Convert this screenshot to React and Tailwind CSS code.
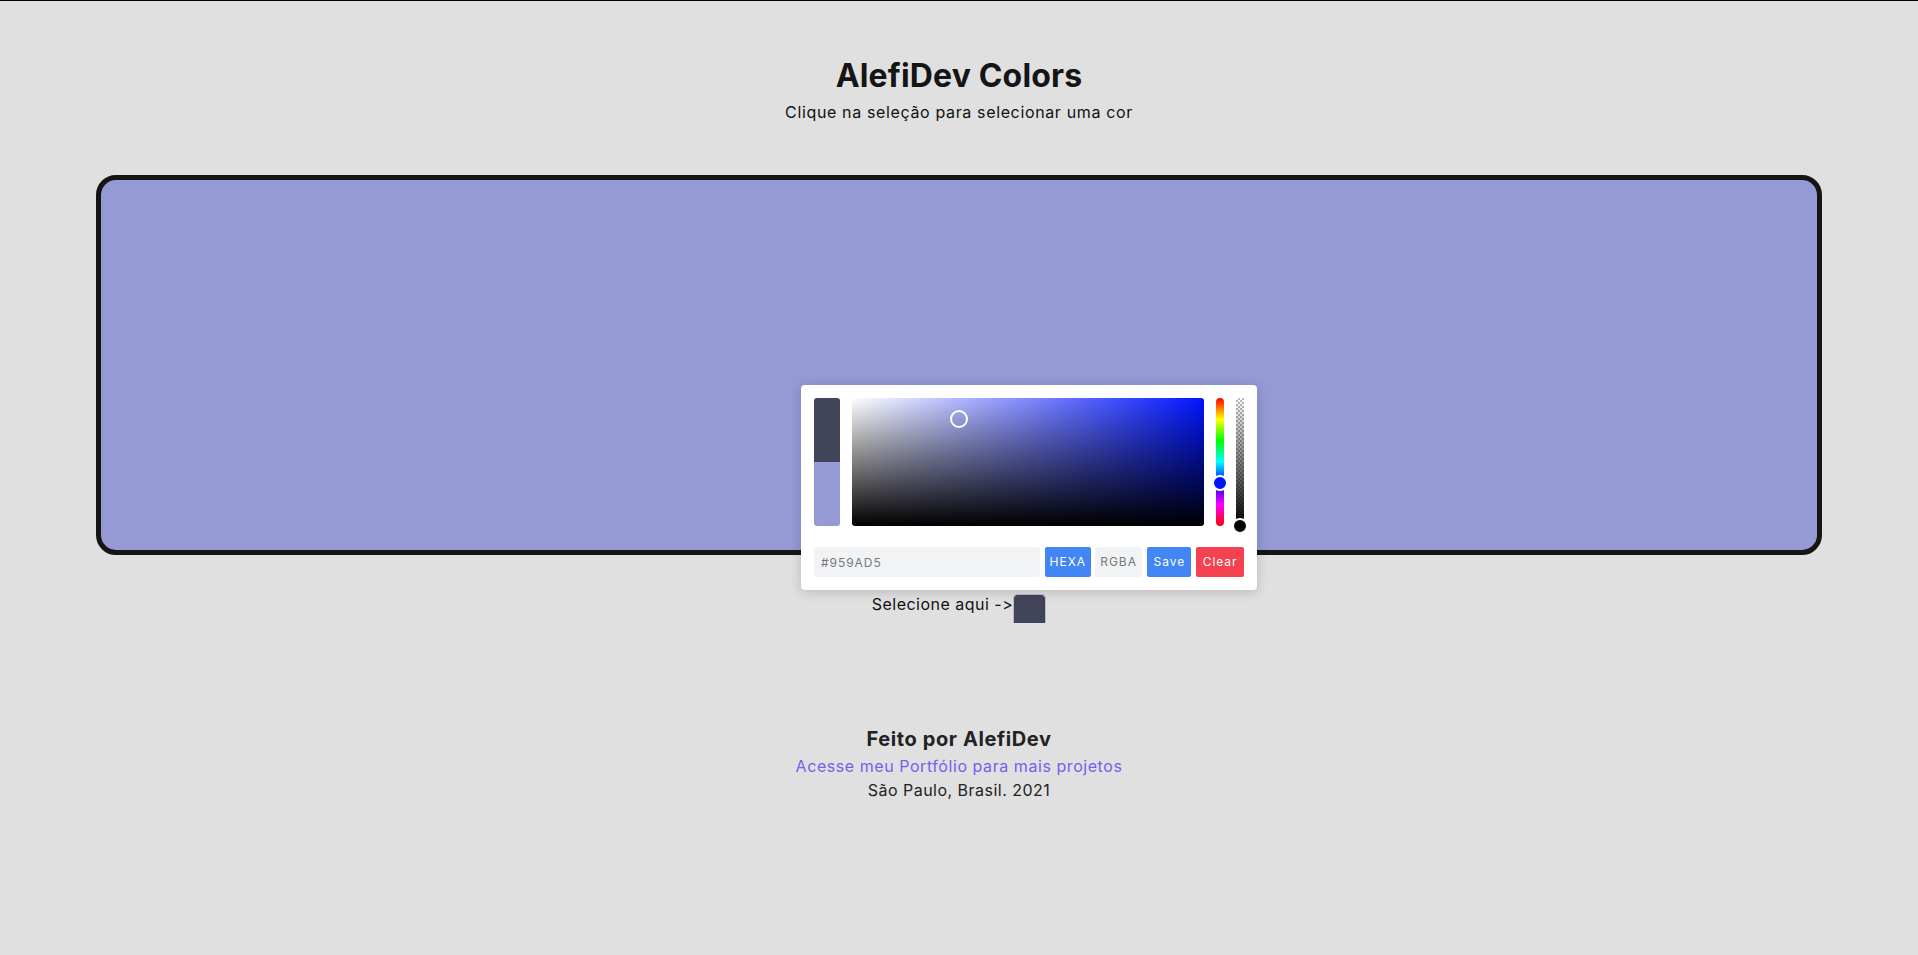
import React from 'react';

const font = { fontFamily: 'Inter, "Noto Sans", sans-serif' };

// popup do seletor de cor (estilo pickr classic)
function ColorPicker() {
    return (
        <div className="absolute left-[801px] top-[384px] w-[456px] h-[205px] bg-white rounded-[4px] shadow-[0_2px_12px_rgba(0,0,0,0.18)] p-[13px] flex flex-col">
            <div className="flex h-[128px]">
                <div className="w-[26px] h-full rounded-[3px] overflow-hidden flex flex-col">
                    <div className="flex-1 bg-[#424459]"></div>
                    <div className="flex-1 bg-[#959AD5]"></div>
                </div>
                <div className="relative ml-[12px] w-[353px] h-full rounded-[3px] overflow-hidden bg-[linear-gradient(to_top,#000,transparent),linear-gradient(to_right,#fff,#0015ff)]">
                    <div className="absolute left-[98px] top-[12px] w-[18px] h-[18px] rounded-full border-2 border-white"></div>
                </div>
                <div className="relative ml-[12px] w-[8px] h-full rounded-full bg-[linear-gradient(to_bottom,#f00,#ff0,#0f0,#0ff,#00f,#f0f,#f00)]">
                    <div className="absolute left-[-4px] top-[77px] w-[16px] h-[16px] rounded-full bg-[#0015ff] border-2 border-white"></div>
                </div>
                <div className="relative ml-[12px] w-[8px] h-full">
                    <div className="w-full h-full bg-[repeating-conic-gradient(#bbb_0%_25%,#fff_0%_50%)] bg-[length:4px_4px]">
                        <div className="w-full h-full bg-[linear-gradient(to_bottom,transparent,#000)]"></div>
                    </div>
                    <div className="absolute left-[-4px] top-[120px] w-[16px] h-[16px] rounded-full bg-black border-2 border-white"></div>
                </div>
            </div>
            <div className="flex mt-[21px] h-[30px] text-[12px] tracking-[0.08em]">
                <input
                    readOnly
                    value="#959AD5"
                    className="w-[227px] h-full bg-[#f1f3f4] rounded-[2px] px-[7px] text-[#75797e] tracking-[0.08em] outline-none"
                    style={font}
                />
                <button className="ml-[5px] w-[46px] h-full bg-[#4285f4] text-white rounded-[2px]">HEXA</button>
                <button className="ml-[4px] w-[48px] h-full bg-[#f1f3f4] text-[#75797e] rounded-[2px]">RGBA</button>
                <button className="ml-[5px] w-[44px] h-full bg-[#4285f4] text-white rounded-[2px]">Save</button>
                <button className="ml-[5px] w-[48px] h-full bg-[#f44250] text-white rounded-[2px]">Clear</button>
            </div>
        </div>
    );
}

export default function App() {
    return (
        <div className="relative min-h-[955px] bg-[#e0e0e0] border-t border-black text-[#111]" style={font}>
            <header className="pt-[51px] text-center">
                <h1 className="text-[32px] leading-[48px] font-bold text-[#151515] tracking-[0.005em]">AlefiDev Colors</h1>
                <p className="text-[16px] leading-[24px] tracking-[0.04em]">Clique na seleção para selecionar uma cor</p>
            </header>

            <main className="mt-[51px] mx-auto w-[90%] h-[380px] border-[5px] border-[#151515] rounded-[20px] bg-[#959AD5]"></main>

            <div className="mt-[39px] flex justify-center items-start">
                <span className="text-[16px] leading-[20px] tracking-[0.03em] [font-variant-ligatures:none] [font-feature-settings:'calt'_0]">Selecione aqui -&gt;</span>
                <button className="w-[33px] h-[29px] bg-[#42445a] border border-b-0 border-[#b9bac6] rounded-t-[5px]"></button>
            </div>

            <footer className="mt-[101px] text-center">
                <h2 className="text-[20px] leading-[30px] font-bold text-[#222] tracking-[0.03em]">Feito por AlefiDev</h2>
                <a href="#" className="block text-[16px] leading-[24px] text-[#7b5cf0] tracking-[0.035em]">Acesse meu Portfólio para mais projetos</a>
                <p className="text-[16px] leading-[24px] text-[#222] tracking-[0.03em]">São Paulo, Brasil. 2021</p>
            </footer>

            <ColorPicker />
        </div>
    );
}
